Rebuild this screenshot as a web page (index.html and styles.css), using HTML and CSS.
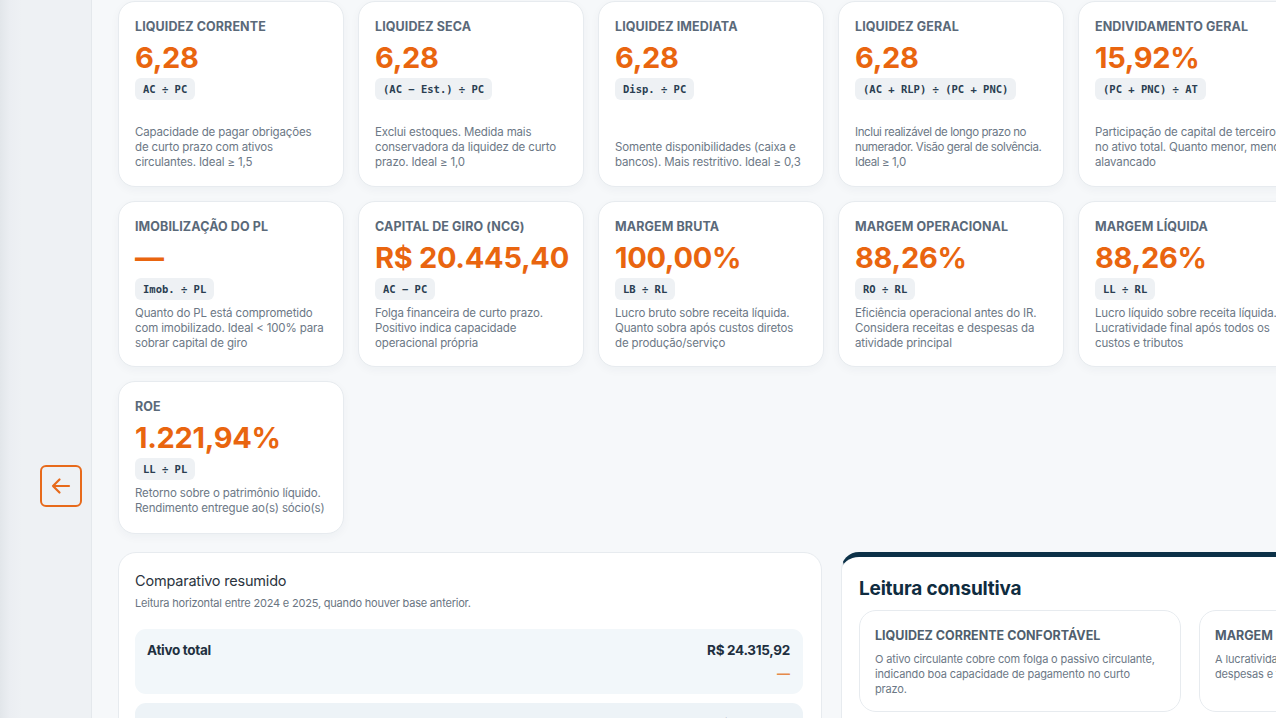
FILE: index.html
```html
<!DOCTYPE html>
<html lang="pt-BR">
<head>
<meta charset="utf-8">
<title>Indicadores</title>
<link rel="stylesheet" href="styles.css">
</head>
<body>
<div class="app">
  <aside class="sidebar">
    <button class="toggle" aria-label="Recolher">
      <svg viewBox="0 0 42 42" width="42" height="42">
        <rect x="1" y="1" width="40" height="40" rx="5" fill="none" stroke="#e76a1b" stroke-width="2"/>
        <path d="M29 21H13M19.5 14.5L13 21l6.5 6.5" fill="none" stroke="#e76a1b" stroke-width="2.2" stroke-linecap="round" stroke-linejoin="round"/>
      </svg>
    </button>
  </aside>
  <main class="main">
    <section class="grid">
      <article class="card bottom">
        <h3 class="c-title">Liquidez corrente</h3>
        <div class="c-value">6,28</div>
        <span class="chip">AC ÷ PC</span>
        <p class="c-desc">Capacidade de pagar obrigações de curto prazo com ativos circulantes. Ideal ≥ 1,5</p>
      </article>
      <article class="card bottom">
        <h3 class="c-title">Liquidez seca</h3>
        <div class="c-value">6,28</div>
        <span class="chip">(AC − Est.) ÷ PC</span>
        <p class="c-desc">Exclui estoques. Medida mais conservadora da liquidez de curto prazo. Ideal ≥ 1,0</p>
      </article>
      <article class="card bottom">
        <h3 class="c-title">Liquidez imediata</h3>
        <div class="c-value">6,28</div>
        <span class="chip">Disp. ÷ PC</span>
        <p class="c-desc">Somente disponibilidades (caixa e bancos). Mais restritivo. Ideal ≥ 0,3</p>
      </article>
      <article class="card bottom">
        <h3 class="c-title">Liquidez geral</h3>
        <div class="c-value">6,28</div>
        <span class="chip">(AC + RLP) ÷ (PC + PNC)</span>
        <p class="c-desc tight">Inclui realizável de longo prazo no numerador. Visão geral de solvência. Ideal ≥ 1,0</p>
      </article>
      <article class="card bottom">
        <h3 class="c-title">Endividamento geral</h3>
        <div class="c-value">15,92%</div>
        <span class="chip">(PC + PNC) ÷ AT</span>
        <p class="c-desc">Participação de capital de terceiros no ativo total. Quanto menor, menos alavancado</p>
      </article>

      <article class="card">
        <h3 class="c-title">Imobilização do PL</h3>
        <div class="c-value">—</div>
        <span class="chip">Imob. ÷ PL</span>
        <p class="c-desc">Quanto do PL está comprometido com imobilizado. Ideal &lt; 100% para sobrar capital de giro</p>
      </article>
      <article class="card">
        <h3 class="c-title">Capital de giro (NCG)</h3>
        <div class="c-value">R$ 20.445,40</div>
        <span class="chip">AC − PC</span>
        <p class="c-desc">Folga financeira de curto prazo. Positivo indica capacidade operacional própria</p>
      </article>
      <article class="card">
        <h3 class="c-title">Margem bruta</h3>
        <div class="c-value">100,00%</div>
        <span class="chip">LB ÷ RL</span>
        <p class="c-desc">Lucro bruto sobre receita líquida. Quanto sobra após custos diretos de produção/serviço</p>
      </article>
      <article class="card">
        <h3 class="c-title">Margem operacional</h3>
        <div class="c-value">88,26%</div>
        <span class="chip">RO ÷ RL</span>
        <p class="c-desc">Eficiência operacional antes do IR. Considera receitas e despesas da atividade principal</p>
      </article>
      <article class="card">
        <h3 class="c-title">Margem líquida</h3>
        <div class="c-value">88,26%</div>
        <span class="chip">LL ÷ RL</span>
        <p class="c-desc">Lucro líquido sobre receita líquida. Lucratividade final após todos os custos e tributos</p>
      </article>

      <article class="card">
        <h3 class="c-title">ROE</h3>
        <div class="c-value">1.221,94%</div>
        <span class="chip">LL ÷ PL</span>
        <p class="c-desc">Retorno sobre o patrimônio líquido. Rendimento entregue ao(s) sócio(s)</p>
      </article>
    </section>

    <section class="lower">
      <div class="panel compare">
        <h2 class="p-title">Comparativo resumido</h2>
        <p class="p-sub">Leitura horizontal entre 2024 e 2025, quando houver base anterior.</p>
        <div class="rows">
          <div class="row">
            <div class="row-top">
              <span class="row-label">Ativo total</span>
              <span class="row-val">R$ 24.315,92</span>
            </div>
            <div class="row-delta">—</div>
          </div>
          <div class="row alt">
            <div class="row-top">
              <span class="row-label">Passivo total</span>
              <span class="row-val">R$ 3.870,52</span>
            </div>
            <div class="row-delta">—</div>
          </div>
        </div>
      </div>
      <div class="panel insight">
        <h2 class="i-title">Leitura consultiva</h2>
        <div class="i-cards">
          <div class="i-card">
            <h4 class="i-head">Liquidez corrente confortável</h4>
            <p class="i-text">O ativo circulante cobre com folga o passivo circulante, indicando boa capacidade de pagamento no curto prazo.</p>
          </div>
          <div class="i-card">
            <h4 class="i-head">Margem líquida elevada</h4>
            <p class="i-text">A lucratividade final permanece alta após custos, despesas e tributos.</p>
          </div>
        </div>
      </div>
    </section>
  </main>
</div>
</body>
</html>
```

FILE: styles.css
```css
* { box-sizing: border-box; }
html, body {
  margin: 0;
  width: 1276px;
  height: 718px;
  overflow: hidden;
  background: #f6f8fa;
  font-family: "Inter", "Noto Sans", sans-serif;
}
.app {
  display: flex;
  height: 718px;
}
.sidebar {
  flex: 0 0 92px;
  background: linear-gradient(to right, #e2e6ea 0, #ebeef2 10px, #eef1f4 22px, #eef1f4 100%);
  border-right: 1px solid #e4e8ec;
  padding-top: 465px;
  padding-left: 40px;
}
.toggle {
  display: block;
  width: 42px;
  height: 42px;
  padding: 0;
  border: 0;
  background: transparent;
  cursor: pointer;
}
.toggle svg { display: block; }

.main {
  flex: 0 0 auto;
  padding: 1px 0 0 26px;
}
.grid {
  display: grid;
  grid-template-columns: repeat(5, 226px);
  grid-template-rows: 186px 166px 153px;
  column-gap: 14px;
  row-gap: 14px;
}
.card {
  background: #fff;
  border: 1px solid #e7ebef;
  border-radius: 17px;
  box-shadow: 0 3px 10px rgba(20, 45, 70, 0.04);
  padding: 17px 17px 16px 16px;
  display: flex;
  flex-direction: column;
  align-items: flex-start;
}
.c-title {
  margin: 0;
  font-size: 12.5px;
  line-height: 16px;
  font-weight: 700;
  color: #5a6979;
  text-transform: uppercase;
  letter-spacing: 0.1px;
  white-space: nowrap;
}
.c-value {
  margin-top: 6px;
  font-size: 29px;
  line-height: 34px;
  font-weight: 700;
  color: #e9650f;
  letter-spacing: -0.3px;
  white-space: nowrap;
}
.chip {
  margin-top: 3px;
  display: inline-block;
  height: 22px;
  line-height: 22px;
  padding: 0 8px;
  border-radius: 6px;
  background: #eef1f4;
  font-family: "DejaVu Sans Mono", "Liberation Mono", monospace;
  font-size: 10.5px;
  font-weight: 700;
  color: #2a3e51;
  white-space: pre;
}
.c-desc {
  margin: 6px 0 0;
  font-size: 11.5px;
  line-height: 15px;
  color: #6c7886;
  letter-spacing: -0.15px;
}
.c-desc.tight { letter-spacing: -0.4px; }
.card.bottom .c-desc { margin-top: auto; padding-top: 6px; }

.lower {
  display: grid;
  grid-template-columns: 704px 463px;
  column-gap: 19px;
  margin-top: 18px;
}
.panel {
  background: #fff;
  border: 1px solid #e7ebef;
  border-radius: 18px 18px 0 0;
  height: 200px;
}
.compare {
  padding: 18px 18px 0 16px;
}
.p-title {
  margin: 0;
  font-size: 14.5px;
  line-height: 20px;
  font-weight: 400;
  color: #2b343e;
  letter-spacing: -0.2px;
}
.p-sub {
  margin: 5px 0 0;
  font-size: 11px;
  line-height: 14px;
  color: #6a7582;
  letter-spacing: -0.2px;
}
.rows {
  margin-top: 19px;
  display: flex;
  flex-direction: column;
  gap: 9px;
}
.row {
  background: #f2f7fa;
  border-radius: 11px;
  height: 65px;
  padding: 12px 13px 0 12px;
}
.row.alt { background: #edf3f7; }
.row-top {
  display: flex;
  justify-content: space-between;
  font-size: 13.5px;
  line-height: 18px;
  font-weight: 700;
  color: #1f3040;
  letter-spacing: -0.3px;
}
.row-delta {
  text-align: right;
  margin-top: 7px;
  font-size: 13px;
  line-height: 14px;
  font-weight: 700;
  color: #e58a4a;
}
.insight {
  border-top: 5px solid #0c3148;
  border-left-color: #e7ebef;
  padding: 20px 0 0 17px;
  overflow: hidden;
}
.i-title {
  margin: 0;
  font-size: 19px;
  line-height: 24px;
  font-weight: 700;
  color: #0f2c40;
  letter-spacing: -0.2px;
}
.i-cards {
  margin-top: 9px;
  display: flex;
  gap: 18px;
}
.i-card {
  flex: 0 0 322px;
  height: 102px;
  border: 1px solid #e7ebef;
  border-radius: 17px;
  background: #fff;
  padding: 17px 16px 0 15px;
}
.i-head {
  margin: 0;
  font-size: 12.5px;
  line-height: 16px;
  font-weight: 700;
  color: #505f6e;
  text-transform: uppercase;
  letter-spacing: 0;
  white-space: nowrap;
}
.i-text {
  margin: 8px 0 0;
  font-size: 11px;
  line-height: 15px;
  color: #6c7886;
  letter-spacing: -0.15px;
}
```
